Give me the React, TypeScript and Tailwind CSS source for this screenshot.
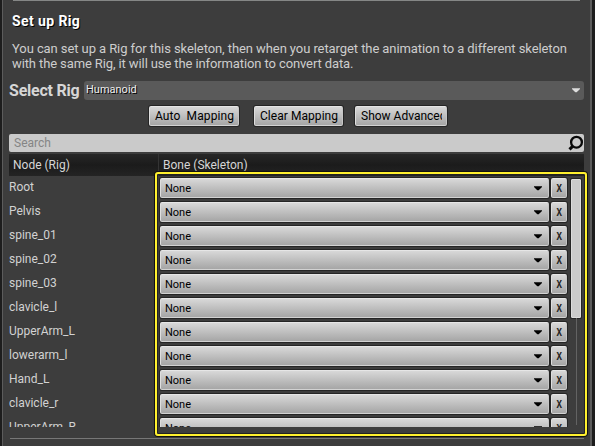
import React from "react";

const NODES = [
  "Root",
  "Pelvis",
  "spine_01",
  "spine_02",
  "spine_03",
  "clavicle_l",
  "UpperArm_L",
  "lowerarm_l",
  "Hand_L",
  "clavicle_r",
  "UpperArm_R",
];

const RAISED =
  "rounded-[2px] border border-t-[#e6e6e6] border-l-[#dedede] border-r-[#c6c6c6] border-b-[#d2d2d2] bg-linear-to-b from-[#d8d8d8] to-[#a6a6a6] text-black shadow-[0_0_0_1px_#252525]";

function Caret({ className }: { className: string }) {
  return (
    <svg width="10" height="5" viewBox="0 0 10 5" className={className}>
      <path d="M1 0.3H9V1L5.7 4.3H4.3L1 1Z" fill="currentColor" />
    </svg>
  );
}

function ActionButton({ label, className }: { label: string; className: string }) {
  return (
    <button
      className={`h-5 shrink-0 overflow-hidden whitespace-pre pl-[5px] text-left text-[12px] leading-[18px] ${RAISED} ${className}`}
    >
      {label}
    </button>
  );
}

function Row({ name }: { name: string }) {
  return (
    <div className="flex h-6 shrink-0 items-start">
      <div className="w-[151px] shrink-0 pt-[3px] text-[12px] leading-4 text-[#d2d2d2]">{name}</div>
      <button
        className={`mt-[2px] flex h-5 w-[389px] shrink-0 items-center justify-between pr-[5px] pl-[4px] text-[11px] ${RAISED}`}
      >
        <span className="mt-[2px] leading-4">None</span>
        <Caret className="text-black" />
      </button>
      <button
        className={`mt-[2px] ml-[2px] flex h-5 w-4 shrink-0 items-center justify-center font-['Liberation_Mono',monospace] text-[11px] font-bold ${RAISED}`}
      >
        <span className="inline-block scale-x-90 scale-y-125 leading-4 text-[#222]">x</span>
      </button>
    </div>
  );
}

export default function App() {
  return (
    <div className="relative flex h-[446px] w-[595px] overflow-hidden bg-[#1d1d1d] font-['Roboto',sans-serif]">
      <div className="ml-[2px] flex w-[590px] flex-col border-r-2 border-l border-[#5c5c5c] bg-[#3d3d3d] pl-[6px]">
        <div className="ml-1 h-px w-[567px] shrink-0 bg-[#858786]" />
        <h1 className="mt-[11px] h-[18px] shrink-0 pl-[3px] text-[14px] leading-[18px] font-bold tracking-[0.4px] text-white [text-shadow:1px_1px_0_#000]">
          Set up Rig
        </h1>
        <p className="mt-[11px] h-[30px] shrink-0 pl-[3px] text-[13px] leading-[15px] whitespace-nowrap text-[#cdcdcd]">
          <span className="tracking-[-0.08px]">
            You can set up a Rig for this skeleton, then when you retarget the animation to a different skeleton
          </span>
          <br />
          <span className="tracking-[-0.11px]">with the same Rig, it will use the information to convert data.</span>
        </p>
        <div className="mt-[10px] flex h-[19px] w-[575px] shrink-0 items-center">
          <span className="w-[75px] shrink-0 text-[16px] leading-[19px] font-bold tracking-[-0.22px] whitespace-nowrap text-[#d6d6d6]">
            Select Rig
          </span>
          <div className="flex h-[19px] flex-1 items-center justify-between rounded-[3px] bg-[#5a5a5a] pr-[3px] pl-[2px]">
            <span className="-mt-px text-[11px] leading-4 text-[#ececec] [text-shadow:1px_1px_0_#000]">
              Humanoid
            </span>
            <Caret className="text-[#dedede]" />
          </div>
        </div>
        <div className="mt-[6px] flex h-5 shrink-0 pl-[140px]">
          <ActionButton label="Auto  Mapping" className="w-[90px] tracking-[0.1px]" />
          <ActionButton label="Clear Mapping" className="ml-[15px] w-[89px] tracking-[0.05px]" />
          <div className={`ml-[12px] h-5 w-[92px] pr-[4px] pl-[5px] ${RAISED}`}>
            <div className="overflow-hidden text-[12px] leading-[18px] whitespace-nowrap">Show Advanced</div>
          </div>
        </div>
        <div className="mt-2 flex h-[18px] w-[575px] shrink-0 items-center justify-between rounded-[2px] bg-[#cacaca] pl-[5px]">
          <span className="text-[12px] leading-4 text-[#858585]">Search</span>
          <svg width="17" height="18" viewBox="0 0 17 18" fill="none" stroke="#090909">
            <circle cx="9.5" cy="8.2" r="5.4" strokeWidth="2.3" />
            <path d="M5.9 12.1L2.5 15.4" strokeWidth="3" />
          </svg>
        </div>
        <div className="mt-[2px] flex h-[22px] w-[575px] shrink-0 bg-linear-to-b from-[#272727] via-[#1b1b1b] to-[#242424] text-[12px] leading-[22px] text-[#d6d6d6]">
          <div className="w-[150px] border-r border-[#343434] pl-[4px]">Node (Rig)</div>
          <div className="pl-[4px]">Bone (Skeleton)</div>
        </div>
        <div className="flex h-[251px] shrink-0 overflow-hidden">
          <div className="flex w-[558px] shrink-0 flex-col">
            {NODES.map((name) => (
              <Row key={name} name={name} />
            ))}
          </div>
          <div className="ml-[4px] flex w-[10px] flex-col items-center pt-[3px]">
            <div className="h-[139px] w-[10px] shrink-0 rounded-[1px] border border-[#dcdcdc] bg-[#cbcbcb] shadow-[0_0_0_1px_#252525]" />
            <div className="h-[107px] w-px bg-[#636363]" />
          </div>
        </div>
        <div className="mt-[11px] ml-px h-px w-[574px] shrink-0 bg-[#777]" />
      </div>
      <div className="pointer-events-none absolute top-[172px] left-[155px] h-[264px] w-[432px] rounded-[3px] border-2 border-[#fff02e] shadow-[0_0_0_1px_#111,inset_0_0_0_1px_#222]" />
    </div>
  );
}
